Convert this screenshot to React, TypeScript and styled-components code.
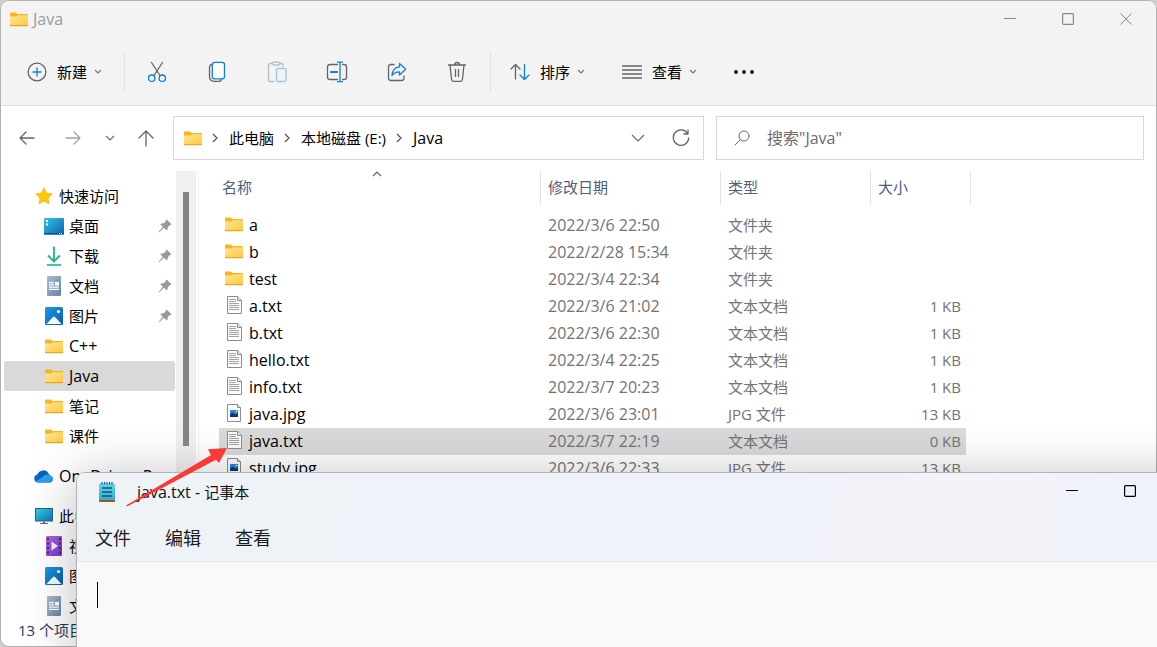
import React from "react";
import styled, { createGlobalStyle, css } from "styled-components";

const GlobalStyle = createGlobalStyle`
  *, *::before, *::after { box-sizing: border-box; }
  body {
    margin: 0;
    overflow: hidden;
    font-family: "Open Sans", "Noto Sans CJK SC", sans-serif;
    font-size: 15px;
    line-height: 20px;
    color: #000;
  }
  button, input, textarea {
    font: inherit;
    color: inherit;
    border: 0;
    padding: 0;
    margin: 0;
    background: none;
    outline: none;
  }
  a { color: inherit; text-decoration: none; }
  ul, ol { list-style: none; margin: 0; padding: 0; }
  svg { display: block; flex: none; }
`;

const Latin = styled.span`
  font-size: 16px;
`;

/* ---------- icons ---------- */

const FolderIcon = () => (
  <svg width="18" height="15" viewBox="0 0 18 15">
    <defs>
      <linearGradient id="folderFace" x1="0" y1="0" x2="1" y2="1">
        <stop offset="0" stopColor="#ffe69f" />
        <stop offset="1" stopColor="#ffc937" />
      </linearGradient>
    </defs>
    <path d="M0 1.200Q0 .5 .8 .5H6L7.400 2H17.200Q18 2 18 2.800V6H0z" fill="#f8b51c" />
    <path d="M0 4.600H6.600L8 3.200H18V14H0z" fill="url(#folderFace)" />
    <path d="M0 13.100H18V13.600Q18 14.300 17.200 14.300H.8Q0 14.300 0 13.600z" fill="#eaa723" />
  </svg>
);

const StarIcon = () => (
  <svg width="18" height="18" viewBox="0 0 18 18">
    <path
      d="M9 .8l2.500 5.300 5.800.8-4.200 4.100 1 5.900L9 14.100 3.900 16.900l1-5.900L.7 6.900l5.800-.8z"
      fill="#ffc80a"
      stroke="#fdb913"
      strokeWidth=".8"
      strokeLinejoin="round"
    />
  </svg>
);

const DesktopIcon = () => (
  <svg width="20" height="17" viewBox="0 0 20 17">
    <defs>
      <linearGradient id="deskFace" x1="0" y1="0" x2="1" y2="1">
        <stop offset="0" stopColor="#33c4dc" />
        <stop offset="1" stopColor="#0b63b8" />
      </linearGradient>
    </defs>
    <rect x="0" y="0" width="20" height="16.500" rx="1" fill="url(#deskFace)" />
    <rect x="0" y="15" width="20" height="1.500" fill="#0a4f8c" />
    <path d="M2 2h2v2H2zM2 5.500h2v2H2zM15 15h1v1h-1zM17 15h1v1h-1z" fill="#fff" />
  </svg>
);

const DownloadIcon = () => (
  <svg width="16" height="20" viewBox="0 0 16 20" fill="none" stroke="#1eb48c" strokeWidth="1.800">
    <path d="M8 .5V15M2 9.500L8 15.500L14 9.500" />
    <path d="M1 19H15" strokeWidth="1.600" />
  </svg>
);

const DocumentsIcon = () => (
  <svg width="14" height="20" viewBox="0 0 14 20">
    <defs>
      <linearGradient id="docFace" x1="0" y1="0" x2="1" y2="1">
        <stop offset="0" stopColor="#a9bdd3" />
        <stop offset="1" stopColor="#6883a5" />
      </linearGradient>
    </defs>
    <rect width="14" height="20" rx="1" fill="url(#docFace)" />
    <path d="M2 6h5v1.200H2zM2 8.300h5v1.200H2zM8 6h4v3.500H8zM2 10.500h10v1.200H2zM2 12.800h10V14H2z" fill="#fff" />
  </svg>
);

const PicturesIcon = () => (
  <svg width="18" height="18" viewBox="0 0 18 18">
    <defs>
      <linearGradient id="picFace" x1="0" y1="0" x2="1" y2="1">
        <stop offset="0" stopColor="#199be2" />
        <stop offset="1" stopColor="#0a5cad" />
      </linearGradient>
    </defs>
    <rect width="18" height="18" rx="1.500" fill="url(#picFace)" />
    <path d="M1.500 17L8 10q1-.9 2 0l6.500 7z" fill="#f4faff" />
    <circle cx="13.500" cy="4.500" r="1.600" fill="#fff" />
  </svg>
);

const CloudIcon = () => (
  <svg width="20" height="13" viewBox="0 0 20 13">
    <path d="M4 12.500A4 4 0 0 1 3.500 4.600A6 6 0 0 1 14.500 3.500L16.500 6A3.600 3.600 0 0 1 16.500 12.500z" fill="#0a63c0" />
    <path d="M1.500 11.500L9.500 6.200A5 5 0 0 1 16 5.500A3.600 3.600 0 0 1 16.500 12.500H4Q2.500 12.500 1.500 11.500z" fill="#2a9fea" />
  </svg>
);

const ComputerIcon = () => (
  <svg width="18" height="16" viewBox="0 0 18 16">
    <defs>
      <linearGradient id="pcFace" x1="0" y1="0" x2="1" y2="1">
        <stop offset="0" stopColor="#36d0dc" />
        <stop offset="1" stopColor="#0c72c0" />
      </linearGradient>
    </defs>
    <rect x=".5" y=".5" width="17" height="12.500" fill="url(#pcFace)" stroke="#21668c" />
    <path d="M8 13.500h2V15h3v1H5v-1h3z" fill="#5b6b78" />
  </svg>
);

const VideoIcon = () => (
  <svg width="16" height="20" viewBox="0 0 16 20">
    <defs>
      <linearGradient id="vidFace" x1="0" y1="0" x2="1" y2="1">
        <stop offset="0" stopColor="#b069e4" />
        <stop offset="1" stopColor="#7339bd" />
      </linearGradient>
    </defs>
    <rect width="16" height="20" rx="1" fill="url(#vidFace)" />
    <path
      d="M1 2h2v2H1zM1 6.500h2v2H1zM1 11h2v2H1zM1 15.500h2v2H1zM13 2h2v2h-2zM13 6.500h2v2h-2zM13 11h2v2h-2zM13 15.500h2v2h-2z"
      fill="#4b2383"
    />
    <path d="M5.500 5.500L12 10L5.500 14.500z" fill="#f7f0ff" />
  </svg>
);

const PinIcon = () => (
  <svg width="14" height="14" viewBox="0 0 14 14" fill="#919ba3">
    <path d="M8.600.5L13.500 5.200L12.600 6.100L11.900 5.900L9.800 8.200Q10 10.300 8.800 11.500L5.900 8.800L1.200 13.300L.6 12.900L4.800 7.800L2.300 5.200Q3.600 4 5.800 4.300L8 2.100L7.700 1.400z" />
  </svg>
);

const TextFileIcon = () => (
  <svg width="15" height="18" viewBox="0 0 15 18">
    <path d="M.5.5H10.800L14.500 4.200V17.500H.5z" fill="#fbfbfb" stroke="#8c8c8c" />
    <path d="M10.500.5V4.500H14.500" fill="#e4e4e4" stroke="#8c8c8c" />
    <path d="M2 3.500H9M2 5.500H9M2 7.500H12M2 9.500H12M2 11.500H12M2 13.500H12" stroke="#a2a2a2" />
  </svg>
);

const ImageFileIcon = () => (
  <svg width="15" height="18" viewBox="0 0 15 18">
    <path d="M.5.5H10.500L13.500 3.500V17.500H.5z" fill="#fbfbfb" stroke="#8c8c8c" />
    <path d="M10.500.5V3.500H13.500" fill="#e4e4e4" stroke="#8c8c8c" />
    <rect x="3" y="6" width="8" height="7" fill="#1d8ad6" />
    <path d="M3 13V10.500L5.500 8.500L8 10.500L11 9V13z" fill="#12337c" />
    <circle cx="9.500" cy="7.500" r=".8" fill="#fff" />
  </svg>
);

const NotepadIcon = () => (
  <svg width="16" height="20" viewBox="0 0 16 20">
    <defs>
      <linearGradient id="padFace" x1="0" y1="0" x2="0" y2="1">
        <stop offset="0" stopColor="#68d3ec" />
        <stop offset="1" stopColor="#35aad0" />
      </linearGradient>
    </defs>
    <rect y="17" width="16" height="3" rx="1" fill="#a35313" />
    <rect y="1.500" width="16" height="16.500" rx="1" fill="url(#padFace)" />
    <path d="M3 0V2.500M5.500 0V2.500M8 0V2.500M10.500 0V2.500M13 0V2.500" stroke="#11607f" strokeWidth="1.200" />
    <path d="M3 6H13M3 10H13M3 14H13" stroke="#085a7c" strokeWidth="1.600" />
  </svg>
);

const Chevron = ({ dir = "down", size = 8, color = "#6a6a6a" }: { dir?: string; size?: number; color?: string }) => {
  const half = size / 2;
  const paths: Record<string, string> = {
    down: `M1 1L${half + 1} ${half + 1}L${size + 1} 1`,
    up: `M1 ${half + 1}L${half + 1} 1L${size + 1} ${half + 1}`,
    right: `M1 1L${half + 1} ${half + 1}L1 ${size + 1}`,
  };
  const w = dir === "right" ? half + 2 : size + 2;
  const h = dir === "right" ? size + 2 : half + 2;
  return (
    <svg width={w} height={h} viewBox={`0 0 ${w} ${h}`} fill="none" stroke={color} strokeWidth="1.200">
      <path d={paths[dir]} />
    </svg>
  );
};

const Glyph = styled.svg.attrs({ fill: "none", strokeLinecap: "round", strokeLinejoin: "round" })`
  stroke: #646464;
  stroke-width: 1.3;
  .blue { stroke: #0f7fd8; }
  .thick { stroke-width: 2; }
  .thin { stroke-width: 1; }
`;

const PlusCircleIcon = () => (
  <Glyph width="20" height="20" viewBox="0 0 20 20">
    <circle cx="10" cy="10" r="8.900" />
    <path className="blue" d="M10 6V14M6 10H14" />
  </Glyph>
);
const CutIcon = () => (
  <Glyph width="20" height="22" viewBox="0 0 20 22">
    <path d="M4.500 1.500L13 14.500M15.500 1.500L7 14.500" />
    <circle className="blue" cx="4.700" cy="17.200" r="3.200" />
    <circle className="blue" cx="15.300" cy="17.200" r="3.200" />
  </Glyph>
);
const CopyIcon = () => (
  <Glyph width="18" height="22" viewBox="0 0 18 22">
    <path d="M3.500 3.500Q1.500 4 1.500 6.500V15.500Q1.500 20.300 6.300 20.300H11Q13 20.300 13.500 18.500" />
    <rect className="blue" x="4.300" y="1.300" width="12.200" height="16.500" rx="2.200" fill="#fafcff" />
  </Glyph>
);
const PasteIcon = () => (
  <Glyph width="20" height="22" viewBox="0 0 20 22" opacity=".38">
    <path d="M5.500 2.500H3Q1.500 2.500 1.500 4V19Q1.500 20.500 3 20.500H7M13 2.500H14.500Q16 2.500 16 4V5.500" />
    <rect x="5.500" y="1.200" width="7.500" height="2.800" rx="1.400" />
    <rect className="blue" x="9.500" y="7.500" width="9.500" height="13" rx="1.500" />
  </Glyph>
);
const RenameIcon = () => (
  <Glyph width="22" height="22" viewBox="0 0 22 22">
    <path d="M11.500 3.500H4Q1.500 3.500 1.500 6V16Q1.500 18.500 4 18.500H11.500M16.500 3.500H18Q20.500 3.500 20.500 6V16Q20.500 18.500 18 18.500H16.500" />
    <path className="blue" d="M14 1.500V20.500M11.500 1.200H16.500M11.500 20.700H16.500" />
    <path className="blue thick" d="M5 11H11" />
  </Glyph>
);
const ShareIcon = () => (
  <Glyph width="20" height="20" viewBox="0 0 20 20">
    <path d="M7 2.500H4Q1.500 2.500 1.500 5V16Q1.500 18.500 4 18.500H14.500Q17 18.500 17 16V14" />
    <path className="blue" d="M12.500 1.500L18.800 7.300L12.500 13V9.800Q7.500 9.700 5 13.500Q5.500 5.500 12.500 4.900z" />
  </Glyph>
);
const TrashIcon = () => (
  <Glyph width="20" height="22" viewBox="0 0 20 22">
    <path d="M1.500 4H18.500M3 4L4.600 18.500Q4.800 20.300 6.500 20.300H13.500Q15.200 20.300 15.400 18.500L17 4M7.500 4Q7.500 1.500 10 1.500Q12.500 1.500 12.500 4M8.500 8.500V15.500M11.500 8.500V15.500" />
  </Glyph>
);
const SortIcon = () => (
  <Glyph width="20" height="18" viewBox="0 0 20 18">
    <path d="M5.500 1.500V16M1 6L5.500 1.500L10 6" />
    <path className="blue" d="M14.500 1.500V16.500M10 12L14.500 16.500L19 12" />
  </Glyph>
);
const ListIcon = () => (
  <Glyph width="20" height="14" viewBox="0 0 20 14">
    <path d="M.5 1H19.500M.5 5H19.500M.5 9H19.500M.5 13H19.500" />
  </Glyph>
);
const DotsIcon = () => (
  <svg width="20" height="4" viewBox="0 0 20 4" fill="#111">
    <circle cx="2" cy="2" r="1.900" />
    <circle cx="10" cy="2" r="1.900" />
    <circle cx="18" cy="2" r="1.900" />
  </svg>
);
const BackIcon = () => (
  <Glyph width="16" height="14" viewBox="0 0 16 14">
    <path d="M15 7H1M7 1L1 7L7 13" />
  </Glyph>
);
const ForwardIcon = () => (
  <Glyph width="16" height="14" viewBox="0 0 16 14" opacity=".6">
    <path d="M1 7H15M9 1L15 7L9 13" />
  </Glyph>
);
const UpIcon = () => (
  <Glyph width="16" height="17" viewBox="0 0 16 17">
    <path d="M8 16V1M1 8L8 1L15 8" />
  </Glyph>
);
const RefreshIcon = () => (
  <Glyph width="18" height="18" viewBox="0 0 18 18">
    <path d="M15.500 4.500A7.700 7.700 0 1 0 16.700 9M16 1V5H12" />
  </Glyph>
);
const SearchIcon = () => (
  <Glyph width="16" height="16" viewBox="0 0 16 16">
    <path className="thin" d="M6.300 9.700L1 15M15 6A5 5 0 1 1 5 6A5 5 0 1 1 15 6" />
  </Glyph>
);
const MinimizeIcon = () => (
  <svg width="12" height="12" viewBox="0 0 12 12" fill="none" stroke="currentColor">
    <path d="M0 5.500H12" />
  </svg>
);
const MaximizeIcon = () => (
  <svg width="12" height="12" viewBox="0 0 12 12" fill="none" stroke="currentColor" strokeWidth="1.200">
    <rect x=".6" y=".6" width="10.800" height="10.800" rx="1" />
  </svg>
);
const CloseIcon = () => (
  <svg width="12" height="12" viewBox="0 0 12 12" fill="none" stroke="currentColor">
    <path d="M.5.5L11.500 11.500M11.500.5L.5 11.500" />
  </svg>
);

/* ---------- windows ---------- */

const Desktop = styled.div`
  position: relative;
  height: 100vh;
  overflow: hidden;
  background: #cfcfd0;
`;

const Explorer = styled.main`
  display: flex;
  flex-direction: column;
  height: 100%;
  overflow: hidden;
  border: 1px solid #b2b2b2;
  border-radius: 9px;
  background: #fff;
`;

const Ribbon = styled.header`
  flex: none;
  background: #f3f3f3;
  border-bottom: 1px solid #dedede;
`;

const TitleBar = styled.div`
  display: flex;
  align-items: center;
  height: 37px;
`;

const WindowTitle = styled.h1`
  flex: 1;
  display: flex;
  align-items: center;
  gap: 5px;
  margin: 0;
  padding: 0 0 1px 9px;
  font-size: 16px;
  font-weight: 400;
  color: #999;
`;

const Controls = styled.div<{ $color: string }>`
  display: flex;
  align-self: flex-start;
  padding-right: 1px;
  color: ${(p) => p.$color};
`;

const ControlButton = styled.button`
  display: grid;
  place-items: center;
  width: 58px;
  height: 36px;
`;

const Toolbar = styled.div`
  display: flex;
  align-items: center;
  height: 67px;
  padding-left: 26px;
`;

const MenuButton = styled.button`
  display: flex;
  align-items: center;
  gap: 10px;
  height: 40px;
`;

const MenuLabel = styled.span`
  margin-right: -3px;
`;

const NewMenuSlot = styled.div`
  padding-right: 22px;
`;

const MenuGroup = styled.div`
  display: flex;
  gap: 37px;
  padding: 0 19px;
`;

const Divider = styled.div`
  width: 1px;
  height: 40px;
  background: #e2e2e2;
`;

const ToolGroup = styled.div`
  display: flex;
  padding: 0 3px 0 2px;
`;

const ToolButton = styled.button`
  display: grid;
  place-items: center;
  width: 60px;
  height: 40px;
`;

const NavRow = styled.div`
  flex: none;
  display: grid;
  grid-template-columns: 142px minmax(0, 531fr) minmax(0, 428fr);
  align-items: center;
  column-gap: 12px;
  height: 65px;
  padding: 0 12px 1px 18px;
`;

const NavButtons = styled.nav`
  display: flex;
  align-items: center;
`;

const NavButton = styled.button<{ $gap: number }>`
  display: grid;
  place-items: center;
  height: 32px;
  margin-right: ${(p) => p.$gap}px;
`;

const field = css`
  display: flex;
  align-items: center;
  height: 44px;
  border: 1px solid #d9d9d9;
  background: #fff;
`;

const AddressBar = styled.div`
  ${field}
  padding: 0 13px 0 10px;
`;

const Crumbs = styled.ol`
  display: flex;
  align-items: center;
  flex: 1;
  white-space: nowrap;
  li { display: flex; align-items: center; }
  li > svg { margin: 0 11px 0 10px; }
`;

const BarButton = styled.button`
  display: grid;
  place-items: center;
  width: 18px;
  height: 32px;
  margin-left: 25px;
`;

const SearchBox = styled.label`
  ${field}
  gap: 17px;
  padding: 0 17px;
`;

const SearchInput = styled.input`
  flex: 1;
  min-width: 0;
  font-size: 16px;
  &::placeholder { color: #6b6b6b; opacity: 1; }
`;

const Body = styled.div`
  flex: 1;
  display: flex;
  min-height: 0;
`;

const Sidebar = styled.nav`
  display: flex;
  flex: none;
  width: 198px;
  padding-right: 2px;
  border-right: 1px solid #f3f3f3;
`;

const Tree = styled.div`
  flex: 1;
  min-width: 0;
  overflow: hidden;
  padding: 10px 1px 0 3px;
`;

const TreeGroup = styled.ul`
  margin-bottom: 10px;
`;

const TreeItem = styled.li<{ $selected?: boolean }>`
  height: 30px;
  border-radius: 2px;
  background: ${(p) => (p.$selected ? "#d9d9d9" : "transparent")};
`;

const TreeLink = styled.a<{ $root?: boolean }>`
  display: grid;
  grid-template-columns: 20px 1fr auto;
  align-items: center;
  column-gap: 5px;
  height: 100%;
  padding: 0 3px 0 ${(p) => (p.$root ? 30 : 40)}px;
  white-space: nowrap;
  > svg:first-child { justify-self: center; }
`;

const ScrollTrack = styled.div`
  width: 20px;
  padding: 21px 7px 0;
  background: #f0f0f0;
`;

const ScrollThumb = styled.div`
  width: 6px;
  height: 254px;
  background: #868686;
`;

const Files = styled.section`
  flex: 1;
  min-width: 0;
  overflow: hidden;
  padding-left: 20px;
`;

const FileTable = styled.table`
  width: 752px;
  table-layout: fixed;
  border-collapse: separate;
  border-spacing: 0;
`;

const HeadCell = styled.th<{ $width: number; $inset: number; $open?: boolean }>`
  position: relative;
  width: ${(p) => p.$width}px;
  height: 33px;
  padding: 0 0 2px ${(p) => p.$inset}px;
  border-right: 1px solid ${(p) => (p.$open ? "transparent" : "#e2e2e2")};
  font-weight: 400;
  text-align: left;
  color: #4c607a;
`;

const SortMark = styled.span`
  position: absolute;
  top: 0;
  left: calc(50% - 8px);
`;

const Gap = styled.tbody`
  td { height: 8px; padding: 0; }
`;

const Row = styled.tr<{ $selected?: boolean }>`
  td, th { background: ${(p) => (p.$selected ? "#d9d9d9" : "transparent")}; }
`;

const Cell = styled.td<{ $size?: number; $right?: boolean }>`
  height: 27px;
  padding: 0 5px 2px 7px;
  font-size: ${(p) => p.$size ?? 15}px;
  text-align: ${(p) => (p.$right ? "right" : "left")};
  color: #737373;
`;

const NameCell = styled.th`
  height: 27px;
  padding: 0 0 2px 6px;
  font-size: 16px;
  font-weight: 400;
  text-align: left;
`;

const FileName = styled.a`
  display: grid;
  grid-template-columns: 18px 1fr;
  align-items: center;
  column-gap: 6px;
  > svg { justify-self: center; margin-bottom: 1px; }
`;

const StatusBar = styled.footer`
  flex: none;
  height: 26px;
  padding: 0 0 0 17px;
  color: #1f3a5f;
`;

const Notepad = styled.section`
  position: absolute;
  left: 76px;
  right: -62px;
  top: 472px;
  bottom: -20px;
  display: flex;
  flex-direction: column;
  border: 1px solid #b0b2b4;
  border-radius: 9px;
  overflow: hidden;
  background: #f9f9f9;
  box-shadow: 0 6px 52px rgba(0, 0, 0, 0.27);
`;

const NotepadHead = styled.header`
  background: linear-gradient(100deg, #eef3f6 0%, #eff2fa 45%, #f1f3f8 80%, #eef2fb 100%);
  border-bottom: 1px solid #e3e6ea;
`;

const NotepadTitle = styled.h2`
  flex: 1;
  display: flex;
  align-items: center;
  gap: 22px;
  margin: 0;
  padding-left: 22px;
  font-size: 15px;
  font-weight: 400;
  color: #111;
`;

const NotepadMenu = styled.div`
  display: flex;
  gap: 34px;
  height: 51px;
  padding: 4px 18px 0;
  button { font-size: 18px; color: #1a1a1a; }
`;

const Editor = styled.label`
  flex: 1;
  display: flex;
  padding: 20px;
`;

const Caret = styled.span`
  width: 1px;
  height: 26px;
  background: #000;
`;

const EditorText = styled.textarea`
  flex: 1;
  resize: none;
  font-size: 18px;
`;

const PointerArrow = styled.svg`
  position: absolute;
  left: 120px;
  top: 440px;
  pointer-events: none;
`;

/* ---------- data ---------- */

type Item = { icon: React.ReactNode; label: string; latin?: boolean; root?: boolean; pinned?: boolean; selected?: boolean };

const tree: Item[][] = [
  [
    { icon: <StarIcon />, label: "快速访问", root: true },
    { icon: <DesktopIcon />, label: "桌面", pinned: true },
    { icon: <DownloadIcon />, label: "下载", pinned: true },
    { icon: <DocumentsIcon />, label: "文档", pinned: true },
    { icon: <PicturesIcon />, label: "图片", pinned: true },
    { icon: <FolderIcon />, label: "C++", latin: true },
    { icon: <FolderIcon />, label: "Java", latin: true, selected: true },
    { icon: <FolderIcon />, label: "笔记" },
    { icon: <FolderIcon />, label: "课件" },
  ],
  [{ icon: <CloudIcon />, label: "OneDrive - Personal", latin: true, root: true }],
  [
    { icon: <ComputerIcon />, label: "此电脑", root: true },
    { icon: <VideoIcon />, label: "视频" },
    { icon: <PicturesIcon />, label: "图片" },
    { icon: <DocumentsIcon />, label: "文档" },
  ],
];

const files = [
  { name: "a", date: "2022/3/6 22:50", type: "文件夹", size: "" },
  { name: "b", date: "2022/2/28 15:34", type: "文件夹", size: "" },
  { name: "test", date: "2022/3/4 22:34", type: "文件夹", size: "" },
  { name: "a.txt", date: "2022/3/6 21:02", type: "文本文档", size: "1 KB" },
  { name: "b.txt", date: "2022/3/6 22:30", type: "文本文档", size: "1 KB" },
  { name: "hello.txt", date: "2022/3/4 22:25", type: "文本文档", size: "1 KB" },
  { name: "info.txt", date: "2022/3/7 20:23", type: "文本文档", size: "1 KB" },
  { name: "java.jpg", date: "2022/3/6 23:01", type: "JPG 文件", size: "13 KB" },
  { name: "java.txt", date: "2022/3/7 22:19", type: "文本文档", size: "0 KB", selected: true },
  { name: "study.jpg", date: "2022/3/6 22:33", type: "JPG 文件", size: "13 KB" },
];

const fileIcon = (name: string) =>
  name.endsWith(".txt") ? <TextFileIcon /> : name.endsWith(".jpg") ? <ImageFileIcon /> : <FolderIcon />;

const tools = [
  { label: "剪切", icon: <CutIcon /> },
  { label: "复制", icon: <CopyIcon /> },
  { label: "粘贴", icon: <PasteIcon /> },
  { label: "重命名", icon: <RenameIcon /> },
  { label: "共享", icon: <ShareIcon /> },
  { label: "删除", icon: <TrashIcon /> },
];

const WindowControls = ({ color }: { color: string }) => (
  <Controls $color={color}>
    <ControlButton aria-label="最小化"><MinimizeIcon /></ControlButton>
    <ControlButton aria-label="最大化"><MaximizeIcon /></ControlButton>
    <ControlButton aria-label="关闭"><CloseIcon /></ControlButton>
  </Controls>
);

const ToolbarMenu = ({ icon, label }: { icon: React.ReactNode; label: string }) => (
  <MenuButton>
    {icon}
    <MenuLabel>{label}</MenuLabel>
    <Chevron size={6} color="#777" />
  </MenuButton>
);

export default function App() {
  return (
    <Desktop>
      <GlobalStyle />
      <Explorer>
        <Ribbon>
          <TitleBar>
            <WindowTitle><FolderIcon />Java</WindowTitle>
            <WindowControls color="#8a8a8a" />
          </TitleBar>
          <Toolbar>
            <NewMenuSlot><ToolbarMenu icon={<PlusCircleIcon />} label="新建" /></NewMenuSlot>
            <Divider />
            <ToolGroup>
              {tools.map((t) => (
                <ToolButton key={t.label} aria-label={t.label}>{t.icon}</ToolButton>
              ))}
            </ToolGroup>
            <Divider />
            <MenuGroup>
              <ToolbarMenu icon={<SortIcon />} label="排序" />
              <ToolbarMenu icon={<ListIcon />} label="查看" />
              <MenuButton aria-label="更多"><DotsIcon /></MenuButton>
            </MenuGroup>
          </Toolbar>
        </Ribbon>

        <NavRow>
          <NavButtons>
            <NavButton $gap={30} aria-label="后退"><BackIcon /></NavButton>
            <NavButton $gap={24} aria-label="前进"><ForwardIcon /></NavButton>
            <NavButton $gap={23} aria-label="最近位置"><Chevron /></NavButton>
            <NavButton $gap={0} aria-label="向上"><UpIcon /></NavButton>
          </NavButtons>
          <AddressBar>
            <FolderIcon />
            <Crumbs>
              <li><Chevron dir="right" color="#555" /><a href="#pc">此电脑</a></li>
              <li><Chevron dir="right" color="#555" /><a href="#e">本地磁盘 (E:)</a></li>
              <li><Chevron dir="right" color="#555" /><a href="#java"><Latin>Java</Latin></a></li>
            </Crumbs>
            <BarButton aria-label="以前的位置"><Chevron size={12} /></BarButton>
            <BarButton aria-label="刷新"><RefreshIcon /></BarButton>
          </AddressBar>
          <SearchBox>
            <SearchIcon />
            <SearchInput type="text" aria-label="搜索" placeholder={'搜索"Java"'} />
          </SearchBox>
        </NavRow>

        <Body>
          <Sidebar>
            <Tree>
              {tree.map((group) => (
                <TreeGroup key={group[0].label}>
                  {group.map((item) => (
                    <TreeItem key={item.label} $selected={item.selected}>
                      <TreeLink href="#folder" $root={item.root}>
                        {item.icon}
                        {item.latin ? <Latin>{item.label}</Latin> : <span>{item.label}</span>}
                        {item.pinned && <PinIcon />}
                      </TreeLink>
                    </TreeItem>
                  ))}
                </TreeGroup>
              ))}
            </Tree>
            <ScrollTrack><ScrollThumb /></ScrollTrack>
          </Sidebar>

          <Files>
            <FileTable>
              <thead>
                <tr>
                  <HeadCell $width={322} $inset={3}>
                    名称
                    <SortMark><Chevron dir="up" color="#666" /></SortMark>
                  </HeadCell>
                  <HeadCell $width={180} $inset={7}>修改日期</HeadCell>
                  <HeadCell $width={150} $inset={7}>类型</HeadCell>
                  <HeadCell $width={95} $inset={7} $open>大小</HeadCell>
                  <HeadCell $width={5} $inset={0} aria-hidden="true" />
                </tr>
              </thead>
              <Gap><tr><td colSpan={5} /></tr></Gap>
              <tbody>
                {files.map((f) => (
                  <Row key={f.name} $selected={f.selected}>
                    <NameCell scope="row">
                      <FileName href="#file">{fileIcon(f.name)}{f.name}</FileName>
                    </NameCell>
                    <Cell $size={16}>{f.date}</Cell>
                    <Cell>{f.type}</Cell>
                    <Cell $right>{f.size}</Cell>
                  </Row>
                ))}
              </tbody>
            </FileTable>
          </Files>
        </Body>
        <StatusBar>13 个项目</StatusBar>
      </Explorer>

      <Notepad aria-label="记事本">
        <NotepadHead>
          <TitleBar>
            <NotepadTitle>
              <NotepadIcon />
              <span><Latin>java.txt - </Latin>记事本</span>
            </NotepadTitle>
            <WindowControls color="#000" />
          </TitleBar>
          <NotepadMenu>
            <button>文件</button>
            <button>编辑</button>
            <button>查看</button>
          </NotepadMenu>
        </NotepadHead>
        <Editor>
          <Caret />
          <EditorText aria-label="文本编辑器" />
        </Editor>
      </Notepad>

      <PointerArrow width="112" height="70" viewBox="0 0 112 70">
        <path d="M107 8L88 9.300L91 15L6 65.500L7 66.500L96 19.700L99 23z" fill="#fb3a38" />
      </PointerArrow>
    </Desktop>
  );
}
